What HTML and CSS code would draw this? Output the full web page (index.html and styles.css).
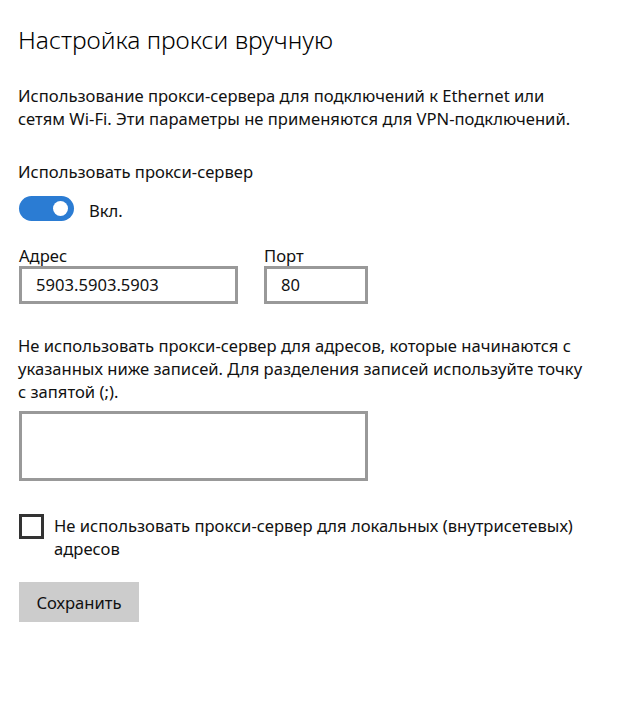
FILE: index.html
```html
<!DOCTYPE html>
<html lang="ru">
<head>
  <meta charset="UTF-8">
  <title>Настройка прокси вручную</title>
  <link rel="stylesheet" href="styles.css">
</head>
<body>
  <div class="page">
    <h1 class="title">Настройка прокси вручную</h1>

    <p class="desc">Использование прокси-сервера для подключений к Ethernet или сетям Wi-Fi. Эти параметры не применяются для VPN-подключений.</p>

    <div class="label">Использовать прокси-сервер</div>
    <div class="toggle-row">
      <span class="toggle"><span class="knob"></span></span>
      <span class="toggle-text">Вкл.</span>
    </div>

    <div class="fields">
      <div class="field">
        <div class="field-label">Адрес</div>
        <div class="box box-address">5903.5903.5903</div>
      </div>
      <div class="field">
        <div class="field-label">Порт</div>
        <div class="box box-port">80</div>
      </div>
    </div>

    <p class="desc desc-exceptions">Не использовать прокси-сервер для адресов, которые начинаются с указанных ниже записей. Для разделения записей используйте точку с запятой (;).</p>

    <div class="box box-area"></div>

    <div class="check-row">
      <span class="checkbox"></span>
      <span class="check-text">Не использовать прокси-сервер для локальных (внутрисетевых) адресов</span>
    </div>

    <button class="save">Сохранить</button>
  </div>
</body>
</html>
```

FILE: styles.css
```css
* { margin: 0; padding: 0; box-sizing: border-box; }

body {
  background: #fff;
  color: #111;
  font-family: "Noto Sans", "Open Sans", sans-serif;
  font-size: 16.6px;
  line-height: 23px;
}

.page {
  padding: 24px 18px 0 18px;
}

/* Header */
.title {
  font-size: 24.6px;
  font-weight: 300;
  line-height: 32px;
  color: #000;
}

.desc {
  margin-top: 28px;
  max-width: 568px;
}

.label {
  margin-top: 30px;
}

/* Toggle */
.toggle-row {
  display: flex;
  align-items: center;
  gap: 15px;
  margin-top: 12px;
  padding-left: 1px;
}
.toggle {
  width: 55px;
  height: 25px;
  border-radius: 13px;
  background: #2b7cd3;
  position: relative;
}
.knob {
  position: absolute;
  right: 6px;
  top: 5px;
  width: 15px;
  height: 15px;
  border-radius: 50%;
  background: #fff;
}
.toggle-text {
  margin-top: 4px;
}

/* Address / port */
.fields {
  display: flex;
  gap: 26px;
  margin-top: 24px;
  padding-left: 1px;
}
.field-label {
  line-height: 20px;
}
.box {
  border: 3px solid #999;
  height: 38px;
  padding: 0 14px;
  line-height: 32px;
}
.box-address { width: 219px; }
.box-port { width: 104px; }

.desc-exceptions {
  margin-top: 30px;
  max-width: 576px;
}

.box-area {
  margin-top: 8px;
  margin-left: 1px;
  width: 349px;
  height: 70px;
}

/* Checkbox */
.check-row {
  display: flex;
  align-items: flex-start;
  gap: 10px;
  margin-top: 33px;
  padding-left: 1px;
  max-width: 580px;
}
.checkbox {
  flex: none;
  width: 25px;
  height: 25px;
  border: 3px solid #333;
}

/* Button */
.save {
  display: block;
  margin-top: 22px;
  margin-left: 1px;
  width: 120px;
  height: 40px;
  border: none;
  background: #ccc;
  color: #111;
  font-family: inherit;
  font-size: 16.6px;
}
```
